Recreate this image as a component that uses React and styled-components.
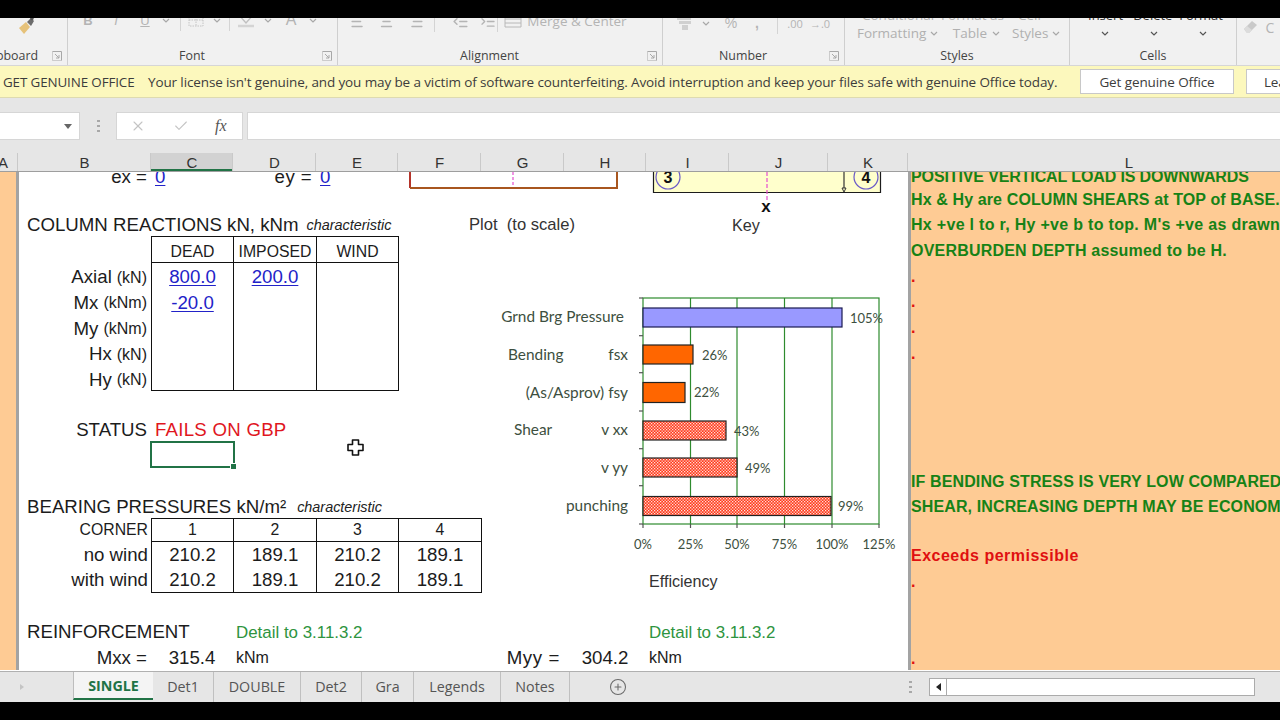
import React from "react";
import styled, { createGlobalStyle } from "styled-components";
import { X, Check, CirclePlus, AlignLeft, AlignCenter, AlignRight, Indent, Outdent } from "lucide-react";

const ARIAL = `"Liberation Sans", Arial, sans-serif`;
const UI = `"Open Sans", "Noto Sans", sans-serif`;
const CHART = `Lato, "Open Sans", sans-serif`;

const Global = createGlobalStyle`
  html, body { margin: 0; padding: 0; background: #000; }
  * { box-sizing: border-box; }
`;

const Frame = styled.div`
  width: 1280px; height: 720px; overflow: hidden; background: #000;
  display: flex; flex-direction: column; font-family: ${ARIAL};
`;
const Letterbox = styled.div`height: ${p => p.$h}px; background: #000; flex: none;`;

/* ---------- ribbon ---------- */
const Ribbon = styled.div`
  height: 48px; flex: none; display: flex; overflow: hidden;
  background: #f1f1f1; border-bottom: 1px solid #d6d6d6;
`;
const Group = styled.div`
  width: ${p => p.$w}px; flex: none; display: grid; grid-template-rows: 28px 19px;
  border-right: ${p => (p.$plain ? "none" : "1px solid #cfcfcf")};
`;
const ToolRow = styled.div`
  display: flex; align-items: center; height: 14px; margin-top: ${p => p.$top ?? -5}px;
  padding-left: ${p => p.$pad || 0}px; color: #b4b4b4; font-family: ${UI}; font-size: 13px;
`;
const Tool = styled.div`
  width: ${p => p.$w}px; flex: none; display: flex; align-items: center; justify-content: center;
  font-family: ${p => (p.$arial ? ARIAL : UI)}; font-weight: ${p => (p.$bold ? 700 : 400)};
  font-style: ${p => (p.$it ? "italic" : "normal")}; text-decoration: ${p => (p.$u ? "underline" : "none")};
  font-size: ${p => p.$fs || 13}px; color: ${p => p.$color || "#b4b4b4"}; white-space: nowrap;
`;
const ToolDivider = styled.div`
  width: 1px; height: 22px; background: #d4d4d4; flex: none;
  margin: 0 ${p => p.$mr ?? p.$m ?? 0}px 0 ${p => p.$m || 0}px;
`;
const StackedTools = styled.div`display: flex; flex-direction: column; margin-top: ${p => p.$top}px;`;
const StackLine = styled.div`
  display: flex; align-items: center; height: 18px; padding-left: ${p => p.$pad || 0}px;
  color: ${p => p.$color || "#b0b0b0"}; font-family: ${UI}; font-size: ${p => p.$fs || 13.5}px; white-space: nowrap;
`;
const GroupFoot = styled.div`display: flex; align-items: center;`;
const GroupLabel = styled.div`
  flex: 1; text-align: center; font-family: ${UI}; font-size: 12.4px; color: #444; white-space: nowrap;
  margin-left: ${p => p.$ml || 0}px;
`;
const LauncherBox = styled.div`width: 21px; flex: none; display: flex; justify-content: center;`;

const Launcher = () => (
  <LauncherBox>
    <svg width="10" height="10" viewBox="0 0 10 10" fill="none" stroke="#a8a8a8" strokeWidth="1">
      <path d="M.5 .5h9v9" /><path d="M.5 .5v9h9" opacity=".5" /><path d="M3 3l4 4M7 4v3H4" />
    </svg>
  </LauncherBox>
);
const Chev = ({ c = "#a8a8a8" }) => (
  <svg width="8" height="5" viewBox="0 0 8 5" fill="none" stroke={c} strokeWidth="1.2"><path d="M1 1l3 3 3-3" /></svg>
);
const Brush = () => (
  <svg width="20" height="20" viewBox="0 0 20 20">
    <path d="M2 13l7-6 4 5-6 7z" fill="#e6c27a" />
    <path d="M10 7l4-4 3 3-3 5z" fill="#6c6c6c" />
    <circle cx="15" cy="3.5" r="1.7" fill="#555" />
  </svg>
);
const Eraser = () => (
  <svg width="18" height="18" viewBox="0 0 18 18"><path d="M2 11l8-8 5 4-8 8H5z" fill="#c9c9c9" /><path d="M2 11l3-3 5 4-3 3H5z" fill="#dcdcdc" /></svg>
);
const BorderIcon = () => (
  <svg width="16" height="14" viewBox="0 0 16 14" fill="none" stroke="#c4c4c4"><path d="M1 1h14v12H1zM8 1v12M1 7h14" strokeDasharray="1.5 1" /></svg>
);
const FillIcon = () => (
  <svg width="20" height="16" viewBox="0 0 20 16" fill="none" stroke="#c0c0c0" strokeWidth="1.4"><path d="M3 3l7 8 7-8" /><path d="M2 14h16" strokeWidth="2.5" stroke="#d4d4d4" /></svg>
);
const MergeIcon = () => (
  <svg width="18" height="14" viewBox="0 0 18 14" fill="none" stroke="#b8b8b8"><path d="M1 1h16v12H1zM1 5h16M1 9h16" /></svg>
);
const CurrencyIcon = () => (
  <svg width="18" height="16" viewBox="0 0 18 16" fill="#d0d0d0"><rect x="1" y="1" width="14" height="4" /><rect x="3" y="6" width="12" height="3" /><rect x="6" y="10" width="6" height="5" /></svg>
);

/* ---------- message bar ---------- */
const MessageBar = styled.div`
  height: 32px; flex: none; display: flex; align-items: center; background: #fcf8bd;
  border-bottom: 1px solid #dedbb0; font-family: ${UI}; color: #3c3c3c; white-space: nowrap;
  padding-left: 3px;
`;
const MessageTitle = styled.span`font-size: 13.4px; width: 145px; flex: none; letter-spacing: -.12px;`;
const MessageText = styled.span`font-size: 13.5px; width: 932px; flex: none; letter-spacing: -.12px;`;
const MessageButton = styled.div`
  height: 25px; flex: none; width: ${p => p.$w}px; margin-right: 12px; background: #fff;
  border: 1px solid #c8c8c8; display: flex; align-items: center; justify-content: center;
  font-size: 13.5px; letter-spacing: -.1px; color: #3c3c3c;
`;

/* ---------- formula bar ---------- */
const FormulaZone = styled.div`
  height: 55px; flex: none; background: #e6e6e6; padding-top: 14px; display: flex; align-items: flex-start;
`;
const NameBox = styled.div`
  width: 80px; height: 28px; background: #fff; border: 1px solid #d6d6d6; border-left: none;
  display: flex; align-items: center; justify-content: flex-end; padding-right: 7px;
`;
const Caret = styled.div`width: 0; height: 0; border: 4px solid transparent; border-top: 5px solid #666; border-bottom: none;`;
const GripDots = styled.div`
  width: 3px; height: ${p => p.$h || 12}px; margin: ${p => p.$m};
  background: repeating-linear-gradient(to bottom, #a8a8a8 0 2px, transparent 2px 5px);
`;
const FxBox = styled.div`
  width: 127px; height: 28px; background: #fff; border: 1px solid #d6d6d6; display: flex; align-items: center;
  padding-left: 13px; color: #c4c4c4;
`;
const CheckMark = styled(Check)`margin-left: 27px;`;
const FxGlyph = styled.span`font: italic 400 16px "Liberation Serif", serif; color: #555; margin-left: 26px;`;
const FormulaInput = styled.div`
  flex: 1; height: 28px; margin-left: 4px; background: #fff; border: 1px solid #d6d6d6; border-right: none;
`;

/* ---------- column headers ---------- */
const ColumnHeads = styled.div`
  height: 19px; flex: none; width: 1280px; overflow: hidden; display: grid; background: #e6e6e6;
  grid-template-columns: 18px 133px 82px 83px 82px 83px 83px 82px 83px 99px 80px 442px;
  border-bottom: 1px solid #9e9e9e;
`;
const ColumnHead = styled.div`
  display: flex; align-items: center; justify-content: ${p => (p.$end ? "flex-end" : "center")};
  padding: 0 ${p => (p.$end ? 9 : 0)}px 0 ${p => (p.$end ? 0 : 1)}px; font-size: 15px; color: #333;
  border-right: 1px solid #c9c9c9;
  background: ${p => (p.$sel ? "#d2d2d2" : "transparent")};
  box-shadow: ${p => (p.$sel ? "inset 0 -2px 0 #217346" : "none")};
`;

/* ---------- sheet ---------- */
const Sheet = styled.div`
  position: relative; flex: none; width: 1280px; height: 500px; overflow: hidden; background: #fff;
  display: grid; border-bottom: 1px solid #b0b0b0; color: #1c1c1c;
  grid-template-columns: 19px 132px 82px 83px 82px 83px 83px 82px 83px 99px 80px 372px;
  grid-template-rows: 13px 25px 26px 26px 25px 26px 26px 25px 26px 26px 26px 26px 25px 25px 23px 26px 25px 26px 26px 26px;
`;
const EdgeColumn = styled.div`
  grid-column: 1; grid-row: 1 / -1; background: #fecb94; border-right: 3px solid #a3a3a3;
`;
const NotesColumn = styled.div`
  grid-column: 12; grid-row: 1 / -1; background: #fecb94; border-left: 3px solid #a3a3a3;
`;
const Cell = styled.div`
  grid-column: ${p => p.$c} / span ${p => p.$span || 1}; grid-row: ${p => p.$r};
  display: flex; align-items: ${p => (p.$clip ? "flex-end" : "center")}; white-space: nowrap; min-width: 0;
  justify-content: ${p => ({ r: "flex-end", c: "center" }[p.$a] || "flex-start")};
  padding: ${p => (p.$clip ? 0 : p.$pt ?? 4)}px ${p => (p.$a === "r" ? p.$pad ?? 4 : 0)}px 0 ${p => (p.$a === "r" ? 0 : p.$pad ?? 0)}px;
  margin-bottom: ${p => p.$mb || 0}px;
  font-size: ${p => p.$fs || 18.67}px; color: ${p => p.$color || "inherit"}; line-height: 1;
  letter-spacing: ${p => p.$ls ?? 0}px;
`;
const Note = styled.span`font-style: italic; font-size: 14.4px; letter-spacing: 0; margin-left: ${p => p.$ml || 8}px; color: #222;`;
const Unit = styled.span`font-size: 16px; margin-left: 5px;`;
const Sup = styled.span`font-size: 18.67px;`;
const Input = styled.span`color: #2222c8; text-decoration: underline; text-underline-offset: 2px; text-decoration-thickness: 1px;`;
const TableCell = styled.div`
  grid-column: ${p => p.$c}; grid-row: ${p => p.$r}; display: flex; align-items: center; justify-content: center;
  font-size: ${p => p.$fs || 18.67}px; line-height: 1; white-space: nowrap; color: #1c1c1c;
  padding-top: ${p => p.$pt ?? 4}px;
  border-left: 1.5px solid #111;
  border-right: ${p => (p.$last ? "1.5px solid #111" : "none")};
  margin-right: ${p => (p.$last ? -1 : 0)}px;
  border-top: ${p => (p.$top ? "1.5px solid #111" : "none")};
  border-bottom: ${p => (p.$bottom ? "1.5px solid #111" : "none")};
  margin-bottom: ${p => (p.$bottom ? -0.5 : 0)}px;
`;
const Selected = styled.div`
  grid-column: 3; grid-row: 12; position: relative; border: 2px solid #217346; margin: -1px -2px 0 -1px;
`;
const FillHandle = styled.span`
  position: absolute; right: -4px; bottom: -4px; width: 7px; height: 7px; background: #217346; border: 1px solid #fff;
`;
const Floating = styled.svg`position: absolute; left: ${p => p.$x}px; top: ${p => p.$y}px; overflow: visible;`;
const ChartText = styled.text`font-family: ${CHART}; font-size: ${p => p.$fs || 15.4}px; fill: #3d4f40;`;
const NoteText = styled(Cell)`font-size: 16px; font-weight: 700; color: ${p => p.$color || "#168216"}; padding-left: 3px;`;
const RedDot = styled(Cell)`font-size: 16px; font-weight: 700; color: #e01010; padding-left: 3px;`;

/* ---------- sheet tabs ---------- */
const TabStrip = styled.div`
  height: 30px; flex: none; background: #e6e6e6; display: flex; align-items: flex-start; position: relative;
  font-family: ${UI}; font-size: 14.3px; color: #555;
`;
const TabNav = styled.div`width: 73px; flex: none; height: 30px; display: flex; align-items: center; padding-left: 20px;`;
const NavArrow = styled.div`width: 0; height: 0; border: 3px solid transparent; border-left: 4px solid #c4c4c4;`;
const Tab = styled.div`
  height: ${p => (p.$active ? 28 : 30)}px; width: ${p => p.$w}px; flex: none; display: flex; align-items: center; justify-content: center;
  padding-bottom: ${p => (p.$active ? 0 : 2)}px;
  background: ${p => (p.$active ? "#f4f4f4" : "transparent")};
  color: ${p => (p.$active ? "#217346" : "#555")}; font-weight: ${p => (p.$active ? 700 : 400)};
  border-right: ${p => (p.$active ? "none" : "1px solid #c0c0c0")};
  border-left: ${p => (p.$active ? "1px solid #bdbdbd" : "none")};
  border-bottom: ${p => (p.$active ? "2px solid #217346" : "none")};
`;
const AddTab = styled.div`margin-left: 39px; height: 30px; display: flex; align-items: center; color: #6a6a6a;`;
const ScrollZone = styled.div`margin-left: auto; display: flex; align-items: center; height: 30px; width: 371px;`;
const ScrollBar = styled.div`
  width: 326px; height: 18px; margin-left: 17px; background: #fff; border: 1px solid #ababab; display: flex;
`;
const ScrollButton = styled.div`
  width: 17px; border-right: 1px solid #ababab; display: flex; align-items: center; justify-content: center;
`;
const ScrollArrow = styled.div`width: 0; height: 0; border: 4px solid transparent; border-right: 5px solid #222; border-left: none;`;

/* ---------- data ---------- */
const columns = ["A", "B", "C", "D", "E", "F", "G", "H", "I", "J", "K", "L"];
const loadRows = [
  ["Axial", "(kN)", "800.0", "200.0", ""],
  ["Mx", "(kNm)", "-20.0", "", ""],
  ["My", "(kNm)", "", "", ""],
  ["Hx", "(kN)", "", "", ""],
  ["Hy", "(kN)", "", "", ""],
];
const pressureRows = [
  ["no wind", "210.2", "189.1", "210.2", "189.1"],
  ["with wind", "210.2", "189.1", "210.2", "189.1"],
];
const notes = [
  [1, "POSITIVE VERTICAL LOAD IS DOWNWARDS", -0.12],
  [2, "Hx & Hy are COLUMN SHEARS at TOP of BASE.", 0.12],
  [3, "Hx +ve l to r, Hy +ve b to top. M's +ve as drawn", 0.3],
  [4, "OVERBURDEN DEPTH assumed to be H.", 0.2],
  [13, "IF BENDING STRESS IS VERY LOW COMPARED TO", 0.12],
  [14, "SHEAR, INCREASING DEPTH MAY BE ECONOMIC", 0.12],
];
const tabs = [
  ["SINGLE", 80, true], ["Det1", 61], ["DOUBLE", 87], ["Det2", 61], ["Gra", 52], ["Legends", 87], ["Notes", 69],
];
const bars = [
  { y: 308, h: 19, x2: 842, fill: "#9999ff", stroke: "#1a1a50", label: "105%", lx: 850 },
  { y: 345, h: 19, x2: 693, fill: "#ff6600", stroke: "#222", label: "26%", lx: 702 },
  { y: 382.5, h: 20, x2: 685, fill: "#ff6600", stroke: "#222", label: "22%", lx: 694 },
  { y: 421, h: 19, x2: 726, fill: "url(#shear)", stroke: "#222", label: "43%", lx: 734 },
  { y: 458, h: 19, x2: 737, fill: "url(#shear)", stroke: "#222", label: "49%", lx: 745 },
  { y: 496.5, h: 19, x2: 831, fill: "url(#shear)", stroke: "#222", label: "99%", lx: 838 },
];
const LEFT = 643, RIGHT = 879, TOP = 298, BOTTOM = 524;
const grid = [690.5, 737, 784.5, 832];
const ticksY = [298, 335.7, 372.7, 411, 448.7, 485.7, 524];
const axis = [[643, "0%"], [690.5, "25%"], [737, "50%"], [784.5, "75%"], [832, "100%"], [879, "125%"]];

const Chart = () => (
  <Floating $x={480} $y={110} width="430" height="290" viewBox="480 282 430 290">
    <defs>
      <pattern id="shear" width="3" height="3" patternUnits="userSpaceOnUse">
        <rect width="3" height="3" fill="#ff3a1a" />
        <rect width="1.3" height="1.3" fill="#fff" opacity=".85" />
        <rect x="1.5" y="1.5" width="1.3" height="1.3" fill="#fff" opacity=".85" />
      </pattern>
    </defs>
    <g stroke="#2e8b2e" strokeWidth="1.2" fill="none">
      <rect x={LEFT} y={TOP} width={RIGHT - LEFT} height={BOTTOM - TOP} />
      {grid.map(x => <path key={x} d={`M${x} ${TOP}V${BOTTOM}`} />)}
      {ticksY.map(y => <path key={y} d={`M${LEFT - 4} ${y}H${LEFT}`} stroke="#555" />)}
      {axis.map(([x]) => <path key={x} d={`M${x} ${BOTTOM}v4`} stroke="#555" />)}
    </g>
    {bars.map(b => (
      <g key={b.y}>
        <rect x={LEFT} y={b.y} width={b.x2 - LEFT} height={b.h} fill={b.fill} stroke={b.stroke} strokeWidth="1.2" />
        <ChartText x={b.lx} y={b.y + 14.5} $fs={13}>{b.label}</ChartText>
      </g>
    ))}
    <ChartText x={624} y={322} textAnchor="end">Grnd Brg Pressure</ChartText>
    <ChartText x={508} y={360}>Bending</ChartText>
    <ChartText x={628} y={360} textAnchor="end">fsx</ChartText>
    <ChartText x={628} y={398} textAnchor="end">(As/Asprov) fsy</ChartText>
    <ChartText x={514} y={435}>Shear</ChartText>
    <ChartText x={628} y={435} textAnchor="end">v xx</ChartText>
    <ChartText x={628} y={473} textAnchor="end">v yy</ChartText>
    <ChartText x={628} y={511} textAnchor="end">punching</ChartText>
    {axis.map(([x, t]) => <ChartText key={t} x={x} y={549} textAnchor="middle" $fs={13}>{t}</ChartText>)}
  </Floating>
);

const PlotOutline = () => (
  <Floating $x={405} $y={0} width="220" height="20" viewBox="405 172 220 20">
    <path d="M410 172V188" stroke="#b5342a" strokeWidth="2" fill="none" />
    <path d="M410 188H617V172" stroke="#a8561f" strokeWidth="2" fill="none" />
    <path d="M513 172V187" stroke="#e44fd0" strokeWidth="1.2" strokeDasharray="3 2" fill="none" />
  </Floating>
);

const KeyDrawing = () => (
  <Floating $x={650} $y={0} width="235" height="46" viewBox="650 172 235 46">
    <path d="M653.5 160V192.5H880.5V160" fill="#ffffcc" stroke="#1c1c1c" strokeWidth="1.2" />
    <circle cx="668" cy="177" r="12" fill="#ffffcc" stroke="#6a5ac8" strokeWidth="1.2" />
    <circle cx="866" cy="177" r="12" fill="#ffffcc" stroke="#6a5ac8" strokeWidth="1.2" />
    <text x="668" y="183" textAnchor="middle" fontFamily={ARIAL} fontWeight="700" fontSize="16" fill="#111">3</text>
    <text x="866" y="183" textAnchor="middle" fontFamily={ARIAL} fontWeight="700" fontSize="16" fill="#111">4</text>
    <path d="M844 172V189" stroke="#333" strokeWidth="1.2" />
    <path d="M842 188h4l-2 4z" fill="#ffffcc" stroke="#333" />
    <path d="M767 172V201" stroke="#e44fd0" strokeWidth="1.2" strokeDasharray="4 2" />
    <text x="766" y="212" textAnchor="middle" fontFamily={ARIAL} fontWeight="700" fontSize="17" fill="#111">x</text>
  </Floating>
);

const PlusCursor = () => (
  <Floating $x={347} $y={267} width="17" height="17" viewBox="0 0 17 17">
    <path d="M5.5 1h6v4.500H16v6h-4.500V16h-6v-4.500H1v-6h4.500z" fill="#fff" stroke="#111" strokeWidth="1.6" strokeLinejoin="round" />
  </Floating>
);

export default function App() {
  return (
    <Frame>
      <Global />
      <Letterbox $h={18} />
      <Ribbon>
        <Group $w={68}>
          <ToolRow $top={0} $pad={17}><Brush /></ToolRow>
          <GroupFoot><GroupLabel $ml={-26}>Clipboard</GroupLabel><Launcher /></GroupFoot>
        </Group>
        <Group $w={270}>
          <ToolRow $pad={10}>
            <Tool $w={20} $arial $bold>B</Tool><Tool $w={8} />
            <Tool $w={20} $arial $it>I</Tool><Tool $w={9} />
            <Tool $w={20} $arial $u>U</Tool>
            <Tool $w={22}><Chev /></Tool>
            <ToolDivider $m={3} />
            <Tool $w={24}><BorderIcon /></Tool>
            <Tool $w={18}><Chev /></Tool>
            <ToolDivider $m={3} />
            <Tool $w={26}><FillIcon /></Tool>
            <Tool $w={18}><Chev /></Tool>
            <Tool $w={28} $arial $fs={16}>A</Tool>
            <Tool $w={16}><Chev /></Tool>
          </ToolRow>
          <GroupFoot><GroupLabel>Font</GroupLabel><Launcher /></GroupFoot>
        </Group>
        <Group $w={325}>
          <ToolRow $top={-4} $pad={7}>
            <Tool $w={26}><AlignLeft size={17} /></Tool>
            <Tool $w={30}><AlignCenter size={17} /></Tool>
            <Tool $w={28}><AlignRight size={17} /></Tool>
            <ToolDivider $m={5} />
            <Tool $w={40}><Outdent size={17} /></Tool>
            <Tool $w={16}><Indent size={17} /></Tool>
            <ToolDivider $m={1} />
            <Tool $w={28}><MergeIcon /></Tool>
            <Tool $w={100} $fs={13.5}>Merge &amp; Center</Tool>
          </ToolRow>
          <GroupFoot><GroupLabel>Alignment</GroupLabel><Launcher /></GroupFoot>
        </Group>
        <Group $w={182}>
          <ToolRow $top={-2} $pad={12}>
            <Tool $w={20}><CurrencyIcon /></Tool>
            <Tool $w={22}><Chev /></Tool>
            <Tool $w={28} $fs={14} $arial>%</Tool>
            <Tool $w={24} $fs={14} $arial $bold>,</Tool>
            <ToolDivider $m={8} $mr={5} />
            <Tool $w={24} $fs={11}>.00</Tool>
            <Tool $w={26} $fs={11}>→.0</Tool>
          </ToolRow>
          <GroupFoot><GroupLabel>Number</GroupLabel><Launcher /></GroupFoot>
        </Group>
        <Group $w={225}>
          <StackedTools $top={-12}>
            <StackLine $pad={17}>Conditional&nbsp;&nbsp;Format as&nbsp;&nbsp;&nbsp;&nbsp;Cell</StackLine>
            <StackLine $pad={12}>
              Formatting<Tool $w={16}><Chev /></Tool>&nbsp;&nbsp;&nbsp;Table<Tool $w={18}><Chev /></Tool>&nbsp;&nbsp;Styles<Tool $w={16}><Chev /></Tool>
            </StackLine>
          </StackedTools>
          <GroupFoot><GroupLabel>Styles</GroupLabel></GroupFoot>
        </Group>
        <Group $w={167}>
          <StackedTools $top={-12}>
            <StackLine $pad={18} $color="#333" $fs={13}>Insert&nbsp;&nbsp;&nbsp;Delete&nbsp;&nbsp;Format</StackLine>
            <StackLine $pad={11}>
              <Tool $w={48}><Chev c="#555" /></Tool><Tool $w={50}><Chev c="#555" /></Tool><Tool $w={48}><Chev c="#555" /></Tool>
            </StackLine>
          </StackedTools>
          <GroupFoot><GroupLabel>Cells</GroupLabel></GroupFoot>
        </Group>
        <Group $w={44} $plain>
          <ToolRow $top={2} $pad={5}>
            <Eraser /><Tool $w={20} $fs={14}>C</Tool>
          </ToolRow>
        </Group>
      </Ribbon>

      <MessageBar>
        <MessageTitle>GET GENUINE OFFICE</MessageTitle>
        <MessageText>Your license isn't genuine, and you may be a victim of software counterfeiting. Avoid interruption and keep your files safe with genuine Office today.</MessageText>
        <MessageButton $w={154}>Get genuine Office</MessageButton>
        <MessageButton $w={108}>Learn more</MessageButton>
      </MessageBar>

      <FormulaZone>
        <NameBox><Caret /></NameBox>
        <GripDots $m="8px 16px 0 17px" />
        <FxBox>
          <X size={16} strokeWidth={1.6} />
          <CheckMark size={16} strokeWidth={1.6} />
          <FxGlyph>fx</FxGlyph>
        </FxBox>
        <FormulaInput />
      </FormulaZone>

      <ColumnHeads>
        {columns.map(c => (
          <ColumnHead key={c} $sel={c === "C"} $end={c === "A"}>{c}</ColumnHead>
        ))}
      </ColumnHeads>

      <Sheet>
        <EdgeColumn />
        <NotesColumn />

        <Cell $c={2} $r={1} $a="r" $clip $mb={-2}>ex =</Cell>
        <Cell $c={3} $r={1} $pad={4} $clip $mb={-2}><Input>0</Input></Cell>
        <Cell $c={4} $r={1} $a="r" $clip $mb={-2} $ls={0.4}>ey =</Cell>
        <Cell $c={5} $r={1} $pad={4} $clip $mb={-2}><Input>0</Input></Cell>

        <Cell $c={2} $r={3} $span={4} $pad={8}>COLUMN REACTIONS kN, kNm<Note>characteristic</Note></Cell>
        <Cell $c={6} $r={3} $span={3} $a="c" $fs={16.6} $color="#333">Plot&nbsp;&nbsp;(to scale)</Cell>
        <Cell $c={10} $r={3} $pad={3} $fs={16.2} $color="#333">Key</Cell>

        {["DEAD", "IMPOSED", "WIND"].map((t, i) => (
          <TableCell key={t} $c={3 + i} $r={4} $top $bottom $last={i === 2} $fs={15.8} $pt={5}>{t}</TableCell>
        ))}
        {loadRows.map(([name, unit, ...vals], r) => (
          <React.Fragment key={name}>
            <Cell $c={2} $r={5 + r} $a="r" $pt={6}>{name}<Unit>{unit}</Unit></Cell>
            {vals.map((v, i) => (
              <TableCell key={i} $c={3 + i} $r={5 + r} $last={i === 2} $bottom={r === 4} $pt={6}>
                {v && <Input>{v}</Input>}
              </TableCell>
            ))}
          </React.Fragment>
        ))}

        <Cell $c={2} $r={11} $a="r" $pt={2}>STATUS</Cell>
        <Cell $c={3} $r={11} $span={3} $pad={4} $pt={2} $color="#e0161e" $ls={0.25}>FAILS ON GBP</Cell>
        <Selected><FillHandle /></Selected>

        <Cell $c={2} $r={14} $span={4} $pad={8}>BEARING PRESSURES kN/m<Sup>²</Sup><Note $ml={11}>characteristic</Note></Cell>
        <Cell $c={2} $r={15} $a="r" $fs={15.8} $pad={3} $pt={0}>CORNER</Cell>
        {["1", "2", "3", "4"].map((t, i) => (
          <TableCell key={t} $c={3 + i} $r={15} $top $bottom $last={i === 3} $fs={15.8} $pt={0}>{t}</TableCell>
        ))}
        {pressureRows.map(([name, ...vals], r) => (
          <React.Fragment key={name}>
            <Cell $c={2} $r={16 + r} $a="r" $pad={3} $pt={2}>{name}</Cell>
            {vals.map((v, i) => (
              <TableCell key={i} $c={3 + i} $r={16 + r} $last={i === 3} $bottom={r === 1} $pt={2}>{v}</TableCell>
            ))}
          </React.Fragment>
        ))}

        <Cell $c={9} $r={17} $pad={3} $fs={16.1} $color="#333">Efficiency</Cell>

        <Cell $c={2} $r={19} $span={2} $pad={8} $pt={2}>REINFORCEMENT</Cell>
        <Cell $c={4} $r={19} $span={3} $pad={3} $fs={16.9} $color="#2e9440">Detail to 3.11.3.2</Cell>
        <Cell $c={9} $r={19} $span={3} $pad={3} $fs={16.9} $color="#2e9440">Detail to 3.11.3.2</Cell>

        <Cell $c={2} $r={20} $a="r" $pt={2}>Mxx =</Cell>
        <Cell $c={3} $r={20} $a="c" $pt={2}>315.4</Cell>
        <Cell $c={4} $r={20} $pad={3} $fs={16} $pt={2}>kNm</Cell>
        <Cell $c={7} $r={20} $a="r" $pt={2} $ls={0.6}>Myy =</Cell>
        <Cell $c={8} $r={20} $a="c" $pt={2}>304.2</Cell>
        <Cell $c={9} $r={20} $pad={3} $fs={16} $pt={2}>kNm</Cell>

        {notes.map(([r, t, ls]) => <NoteText key={r} $c={12} $r={r} $clip={r === 1} $ls={ls} $pt={r >= 13 ? 3 : 4}>{t}</NoteText>)}
        {[5, 6, 7, 8, 17, 20].map(r => <RedDot key={r} $c={12} $r={r}>.</RedDot>)}
        <NoteText $c={12} $r={16} $color="#e01010" $ls={0.5}>Exceeds permissible</NoteText>

        <PlotOutline />
        <KeyDrawing />
        <Chart />
        <PlusCursor />
      </Sheet>

      <TabStrip>
        <TabNav><NavArrow /></TabNav>
        {tabs.map(([t, w, active]) => <Tab key={t} $w={w} $active={active}>{t}</Tab>)}
        <AddTab><CirclePlus size={18} strokeWidth={1.4} /></AddTab>
        <ScrollZone>
          <GripDots $h={13} />
          <ScrollBar><ScrollButton><ScrollArrow /></ScrollButton></ScrollBar>
        </ScrollZone>
      </TabStrip>
      <Letterbox $h={18} />
    </Frame>
  );
}
